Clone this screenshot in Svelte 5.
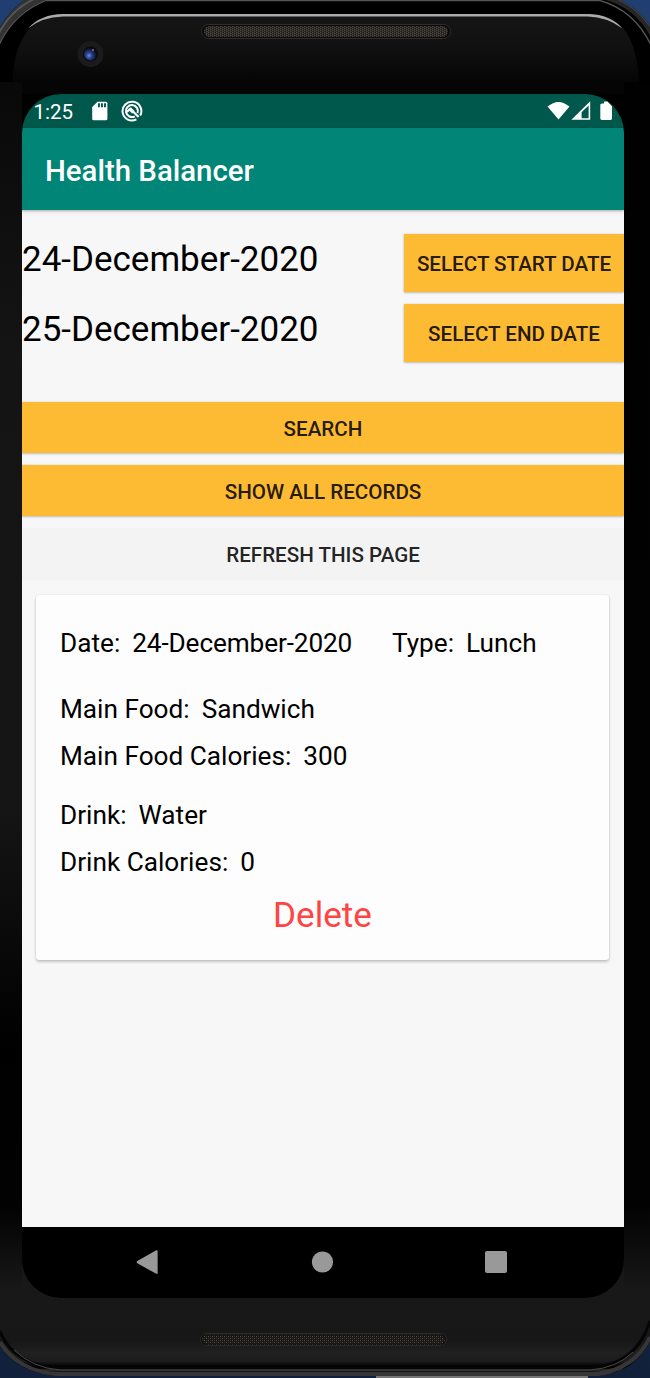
<script>
  const ranges = [
    { date: '24-December-2020', action: 'Select start date' },
    { date: '25-December-2020', action: 'Select end date' }
  ];
  const actions = [
    { label: 'Search', plain: false },
    { label: 'Show all records', plain: false },
    { label: 'Refresh this page', plain: true }
  ];
  const record = {
    date: '24-December-2020',
    type: 'Lunch',
    food: 'Sandwich',
    foodCalories: 300,
    drink: 'Water',
    drinkCalories: 0
  };
</script>

<div class="device">
  <svg class="frame" width="650" height="1378" viewBox="0 0 650 1378" aria-hidden="true">
    <defs>
      <linearGradient id="desk" x1="0" y1="0" x2="0" y2="1">
        <stop offset="0" stop-color="#203e70" />
        <stop offset="1" stop-color="#11213b" />
      </linearGradient>
      <linearGradient id="left" x1="0" y1="82" x2="0" y2="1290" gradientUnits="userSpaceOnUse">
        <stop offset="0" stop-color="#090909" />
        <stop offset=".22" stop-color="#141414" />
        <stop offset=".6" stop-color="#151515" />
        <stop offset=".8" stop-color="#000" />
        <stop offset=".93" stop-color="#020202" />
        <stop offset="1" stop-color="#181818" />
      </linearGradient>
      <linearGradient id="right" x1="0" y1="82" x2="0" y2="1290" gradientUnits="userSpaceOnUse">
        <stop offset="0" stop-color="#010101" />
        <stop offset=".93" stop-color="#020202" />
        <stop offset="1" stop-color="#181818" />
      </linearGradient>
      <linearGradient id="glass" x1="0" y1="0" x2="0" y2="1">
        <stop offset="0" stop-color="#151515" />
        <stop offset=".5" stop-color="#101010" />
        <stop offset="1" stop-color="#050505" />
      </linearGradient>
      <linearGradient id="chin" x1="0" y1="1290" x2="0" y2="1376" gradientUnits="userSpaceOnUse">
        <stop offset="0" stop-color="#181818" />
        <stop offset=".6" stop-color="#171717" />
        <stop offset=".72" stop-color="#202020" />
        <stop offset=".83" stop-color="#1c1c1c" />
        <stop offset=".89" stop-color="#000" />
        <stop offset=".91" stop-color="#000" />
        <stop offset=".93" stop-color="#333" />
        <stop offset=".95" stop-color="#111" />
        <stop offset=".97" stop-color="#333" />
        <stop offset="1" stop-color="#444" />
      </linearGradient>
      <radialGradient id="lens" cx=".38" cy=".62" r=".6">
        <stop offset="0" stop-color="#6f8ee0" />
        <stop offset=".35" stop-color="#2b4694" />
        <stop offset="1" stop-color="#070a18" />
      </radialGradient>
      <pattern id="mesh" width="4" height="2" patternUnits="userSpaceOnUse">
        <rect width="4" height="2" fill="#302d29" />
        <path d="M0 0h1v1h-1zM2 1h1v1h-1z" fill="#4c4740" />
        <path d="M1 1h1v1h-1zM3 0h1v1h-1z" fill="#1f1d1b" />
      </pattern>
      <pattern id="mesh2" width="4" height="4" patternUnits="userSpaceOnUse">
        <rect width="4" height="4" fill="#181714" />
        <path d="M0 0h1v1h-1zM2 2h1v1h-1z" fill="#55504a" />
        <path d="M2 0h1v1h-1zM0 2h1v1h-1z" fill="#34302b" />
      </pattern>
      <clipPath id="body"><path d="M0 27Q10 10 26 -1H618Q638 8 650 26V1341C641 1360 624 1374 596 1376H58C32 1374 10 1363 0 1346Z" /></clipPath>
    </defs>
    <rect width="650" height="1378" fill="url(#desk)" />
    <rect x="376" y="1376" width="212" height="2" fill="#777" />
    <g clip-path="url(#body)">
      <rect width="650" height="1376" fill="#000" />
      <rect y="82" width="22" height="1210" fill="url(#left)" />
      <rect x="22" y="82" width="602" height="14" fill="#050505" />
      <rect x="624" y="82" width="26" height="1210" fill="url(#right)" />
      <rect y="1290" width="650" height="86" fill="url(#chin)" />
      <rect x="22" y="1255" width="602" height="40" fill="#181818" />
      <path d="M13 82V75Q15 45 30 28Q43 17 62 16H590Q609 17 623 28Q637 45 639 82Z" fill="url(#glass)" />
      <path d="M28 28.5Q41 14 63 14H590Q611 15 622.5 28.5Q607 17 588 16.5H63Q42 17 28 28.5Z" fill="#a8aaab" />
      <path d="M0 43Q14 12 46 0H22L0 22Z" fill="#333" />
      <path d="M-1 33Q11 10 34 -1" fill="none" stroke="#555" stroke-width="2" />
      <path d="M-1 45Q14 13 46 .5H600Q634 10 651 45" fill="none" stroke="#555" stroke-width="1.3" />
      <path d="M606 0Q636 9 650 36V22L620 -2Z" fill="#262626" />
      <path d="M618 -1Q638 8 650 26" fill="none" stroke="#444" stroke-width="2" />
      <path d="M0 1342C10 1360 32 1374 60 1374H594C622 1372 641 1357 650 1337" fill="none" stroke="#363636" stroke-width="4" />
      <path d="M0 1331C8 1354 31 1367 60 1368H590C620 1366 641 1351 650 1321" fill="none" stroke="#050505" stroke-width="3" />
      <path d="M14 1350Q33 1368 60 1370H590Q617 1368 633 1352" fill="none" stroke="#484848" stroke-width="1" />
    </g>
    <circle cx="90.5" cy="54" r="13" fill="#1c1a1b" />
    <circle cx="90.5" cy="54" r="7.5" fill="#080912" />
    <circle cx="90.5" cy="54" r="6.5" fill="url(#lens)" />
    <circle cx="93" cy="50" r="1" fill="#a06b88" />
    <rect x="201.5" y="24.5" width="249" height="14" rx="7" fill="#080808" stroke="#2e2e2b" />
    <rect x="204" y="26" width="244" height="11" rx="5.5" fill="url(#mesh)" />
    <rect x="200.5" y="1333.5" width="246" height="12" rx="6" fill="#0a0a0a" stroke="#2a2a2a" />
    <rect x="202" y="1334.5" width="243" height="10" rx="5" fill="url(#mesh2)" />
    <path d="M22 133V94H624V133Z" fill="#000" />
  </svg>

  <main class="screen">
    <div class="status">
      <span class="time">1:25</span>
      <svg class="sd" width="16" height="20" viewBox="0 0 16 20">
        <path d="M5.5 .7H13.8Q15.4.7 15.4 2.3V17.7Q15.4 19.2 13.8 19.2H1.8Q.2 19.2.2 17.7V6Z" fill="#fff" />
        <path d="M6 2.2h1.9v4H6zM9 2.2h1.9v4H9zM12 2.2h1.9v4H12z" fill="#00574b" />
      </svg>
      <svg class="sync" width="22" height="22" viewBox="0 0 22 22" fill="none" stroke="#fff">
        <path d="M15.4 19.4A9.4 9.4 0 1 1 19.2 15.6" stroke-width="2" />
        <path d="M13.8 16.3A6 6 0 1 1 16.5 13.2" stroke-width="2" />
        <path d="M5.8 12L9.2 8.8L17.6 17" stroke-width="2.2" />
        <path d="M8.8 8.8L12.3 12.2" stroke-width="3.4" />
      </svg>
      <svg class="signals" width="66" height="20" viewBox="0 0 66 20">
        <path d="M.5 5.6Q11.5-3.8 22.5 5.6L11.5 18.5Z" fill="#fff" />
        <path d="M24.4 18.8L43.2 .2V18.8ZM34.6 11.3V17.3H41.6V4.4Z" fill="#fff" fill-rule="evenodd" />
        <path d="M53.3 4Q53.3 2.5 54.8 2.5H57V.5H60.5L65 5.2V17.6Q65 19 63.6 19H54.8Q53.3 19 53.3 17.6Z" fill="#fff" />
      </svg>
    </div>
    <header>Health Balancer</header>

    <div class="content">
      <section class="ranges">
        {#each ranges as range}
          <div class="range">
            <span>{range.date}</span>
            <button>{range.action}</button>
          </div>
        {/each}
      </section>

      <section class="actions">
        {#each actions as action}
          <button class:plain={action.plain}>{action.label}</button>
        {/each}
      </section>

      <article>
        <div class="line first">
          <span class="pair date"><span>Date:</span><span class="day">{record.date}</span></span>
          <span class="pair"><span>Type:</span><span>{record.type}</span></span>
        </div>
        <div class="line pair"><span>Main Food:</span><span>{record.food}</span></div>
        <div class="line pair"><span>Main Food Calories:</span><span>{record.foodCalories}</span></div>
        <div class="line pair drink"><span>Drink:</span><span>{record.drink}</span></div>
        <div class="line pair"><span>Drink Calories:</span><span>{record.drinkCalories}</span></div>
        <button class="delete">Delete</button>
      </article>
    </div>

    <nav>
      <svg width="602" height="71" viewBox="0 0 602 71" fill="#999">
        <path d="M115.3 34L133.8 23.5Q135.6 22.5 135.6 24.3V46Q135.6 47.6 133.8 46.6L115.3 36.2Q113.8 35.1 115.3 34Z" />
        <circle cx="300.5" cy="35" r="10.6" />
        <rect x="463" y="24" width="22" height="22" rx="2" />
      </svg>
    </nav>
  </main>
</div>

<style>
  :global(body) {
    margin: 0;
    background: #000;
  }

  .device {
    position: relative;
    box-sizing: border-box;
    width: 650px;
    height: 1378px;
    padding: 94px 26px 80px 22px;
    overflow: hidden;
    font-family: Roboto, sans-serif;
    color: #000;
  }

  .frame {
    position: absolute;
    inset: 0;
  }

  .screen {
    position: relative;
    display: flex;
    flex-direction: column;
    height: 1204px;
    overflow: hidden;
    border-radius: 39px;
  }

  .status {
    display: flex;
    align-items: center;
    flex: none;
    box-sizing: border-box;
    height: 34px;
    padding: 0 12px;
    background: #00574b;
    color: #fff;
  }

  .time {
    width: 58px;
    margin-left: -0.5px;
    font-size: 20.5px;
    line-height: 34px;
    padding-top: 2px;
  }

  .sd {
    margin-right: 13.5px;
  }

  .signals {
    margin-left: auto;
    margin-right: -1px;
  }

  header {
    position: relative;
    flex: none;
    height: 82px;
    padding-left: 23px;
    background: #008577;
    box-shadow: 0 1px 2px rgba(0, 0, 0, 0.25), 0 3px 5px rgba(0, 0, 0, 0.06);
    color: #fff;
    font-size: 29.4px;
    font-weight: 500;
    line-height: 86px;
  }

  .content {
    flex: 1;
    padding-top: 24px;
    background: #f7f7f7;
  }

  .ranges {
    display: grid;
    gap: 12px;
  }

  .range {
    display: flex;
    justify-content: space-between;
    height: 58px;
    font-size: 35px;
    line-height: 52px;
  }

  button {
    display: block;
    margin: 0;
    padding: 0;
    border: 0;
    background: #fdba33;
    box-shadow: 0 1px 2px rgba(0, 0, 0, 0.2), 0 0 2px rgba(0, 0, 0, 0.12);
    color: rgba(0, 0, 0, 0.87);
    font: 500 20.6px/1 Roboto, sans-serif;
    text-transform: uppercase;
  }

  .range button {
    width: 220px;
    padding-top: 3px;
  }

  .actions {
    display: grid;
    gap: 12px;
    margin-top: 40px;
  }

  .actions button {
    height: 51px;
    padding-top: 3px;
  }

  .actions .plain {
    height: 52px;
    background: #f3f3f3;
    box-shadow: none;
  }

  article {
    box-sizing: border-box;
    width: 573px;
    height: 365px;
    margin: 15px 0 0 14px;
    padding: 24px;
    border-radius: 3px;
    background: #fdfdfd;
    box-shadow: 0 2px 3px rgba(0, 0, 0, 0.2), 0 0 2px rgba(0, 0, 0, 0.12);
    font-size: 26.2px;
  }

  .line {
    display: flex;
    height: 47px;
    line-height: 49px;
  }

  .pair {
    display: flex;
    gap: 12px;
  }

  .date {
    width: 332px;
  }

  .day {
    letter-spacing: -0.12px;
  }

  .first {
    margin-bottom: 19px;
  }

  .drink {
    margin-top: 12px;
  }

  .delete {
    width: 100%;
    height: 48px;
    margin-top: 7px;
    background: none;
    box-shadow: none;
    color: #ff4444;
    font-size: 35.1px;
    font-weight: 400;
    text-transform: none;
  }

  nav {
    flex: none;
    height: 71px;
    background: #000;
  }
</style>
